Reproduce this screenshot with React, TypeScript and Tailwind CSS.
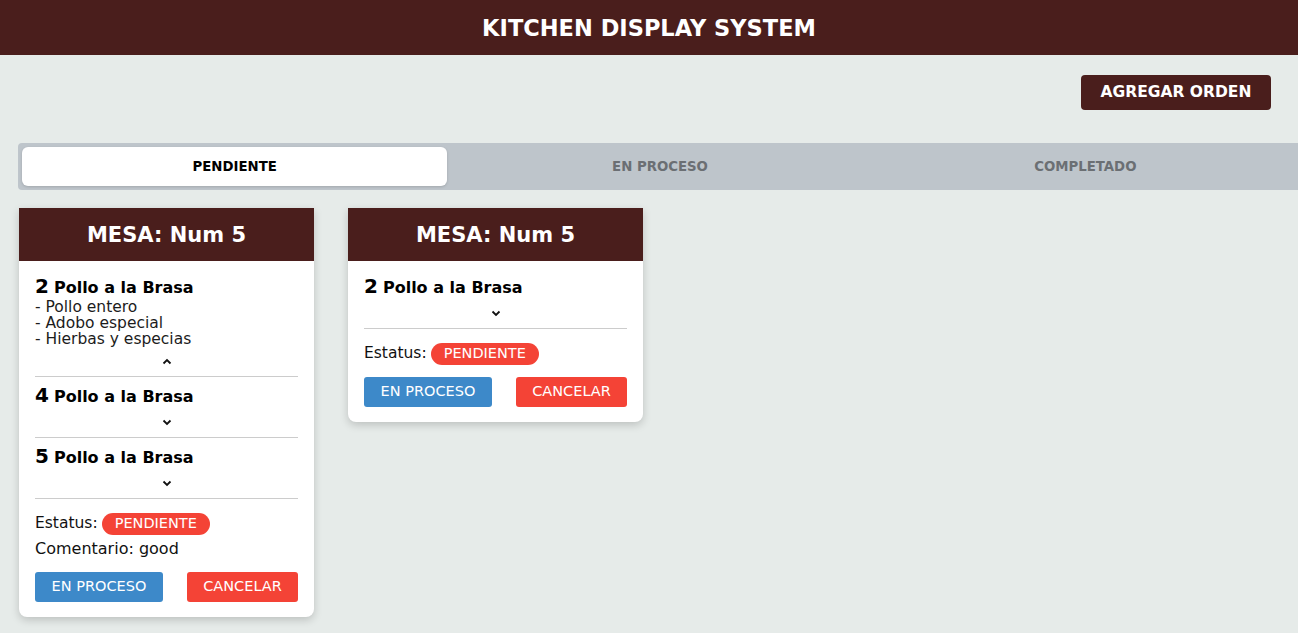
import React from "react";

const Chevron = ({ up = false }: { up?: boolean }) => (
  <svg width="10" height="7" viewBox="0 0 10 7" className="block">
    {up ? (
      <path d="M1.5 5.5 L5 2 L8.5 5.5" fill="none" stroke="#111" strokeWidth="1.8" />
    ) : (
      <path d="M1.5 1.5 L5 5 L8.5 1.5" fill="none" stroke="#111" strokeWidth="1.8" />
    )}
  </svg>
);

type Item = { qty: number; name: string; subs?: string[] };

const ItemBlock = ({ item, first }: { item: Item; first: boolean }) => (
  <div className={`border-b border-[#cccccc] ${first ? "pt-[14px]" : "pt-[7px]"}`}>
    <div className="flex items-baseline h-[24px] leading-[23px]">
      <span className="text-[20px] font-bold text-black mr-[5px]">{item.qty}</span>
      <span className="text-[16px] font-bold text-black">{item.name}</span>
    </div>
    {item.subs && (
      <div className="text-[15.5px] leading-[16px] text-[#1c1c1c]">
        {item.subs.map((s) => (
          <div key={s}>- {s}</div>
        ))}
      </div>
    )}
    <div className="h-[29px] flex items-center justify-center">
      <Chevron up={!!item.subs} />
    </div>
  </div>
);

const Card = ({ items, comment }: { items: Item[]; comment?: string }) => (
  <div className="w-[295px] bg-white rounded-b-[8px] shadow-[0_3px_8px_rgba(0,0,0,0.18)] overflow-hidden">
    <div className="h-[53px] pt-[3px] bg-[#4a1e1c] flex items-center justify-center text-white text-[21px] font-bold">
      MESA: Num 5
    </div>
    <div className="px-[16px] pb-[15px]">
      {items.map((it, i) => (
        <ItemBlock key={i} item={it} first={i === 0} />
      ))}
      <div className="flex items-center mt-[14px] h-[22px] text-[15.5px] text-[#111]">
        <span>Estatus:</span>
        <span className="ml-[4px] h-[22px] px-[13px] rounded-full bg-[#f44336] text-white text-[14.5px] flex items-center">
          PENDIENTE
        </span>
      </div>
      {comment && (
        <div className="text-[16px] text-[#111] leading-[22px] mt-[3px]">Comentario: {comment}</div>
      )}
      <div className="flex justify-between mt-[12px]">
        <button className="h-[30px] w-[128px] rounded-[3px] bg-[#3d89c9] text-white text-[14.5px] font-medium">
          EN PROCESO
        </button>
        <button className="h-[30px] w-[111px] rounded-[3px] bg-[#f44336] text-white text-[14.5px] font-medium">
          CANCELAR
        </button>
      </div>
    </div>
  </div>
);

export default function App() {
  return (
    <div className="min-h-[633px] bg-[#e6ebe9] overflow-x-hidden font-['DejaVu_Sans',sans-serif]">
      <header className="h-[55px] pt-[2px] bg-[#4a1e1c] flex items-center justify-center">
        <h1 className="text-white text-[22.5px] font-bold">KITCHEN DISPLAY SYSTEM</h1>
      </header>
      <div className="flex justify-end pr-[27px] pt-[20px]">
        <button className="h-[35px] w-[190px] pt-[1px] rounded-[4px] bg-[#4a1e1c] text-white text-[15.5px] font-bold">
          AGREGAR ORDEN
        </button>
      </div>
      <div className="ml-[18px] mt-[33px] w-[1284px] h-[47px] bg-[#bec5cb] rounded-[4px] p-[4px] flex">
        <div className="flex-1 bg-white rounded-[6px] flex items-center justify-center text-[13.3px] font-bold text-black shadow-[0_1px_3px_rgba(0,0,0,0.15)]">
          PENDIENTE
        </div>
        <div className="flex-1 flex items-center justify-center text-[13.3px] font-bold text-[#6b6f73]">
          EN PROCESO
        </div>
        <div className="flex-1 flex items-center justify-center text-[13.3px] font-bold text-[#6b6f73]">
          COMPLETADO
        </div>
      </div>
      <div className="flex items-start gap-[34px] ml-[19px] mt-[18px] pb-[17px]">
        <Card
          items={[
            { qty: 2, name: "Pollo a la Brasa", subs: ["Pollo entero", "Adobo especial", "Hierbas y especias"] },
            { qty: 4, name: "Pollo a la Brasa" },
            { qty: 5, name: "Pollo a la Brasa" },
          ]}
          comment="good"
        />
        <Card items={[{ qty: 2, name: "Pollo a la Brasa" }]} />
      </div>
    </div>
  );
}
